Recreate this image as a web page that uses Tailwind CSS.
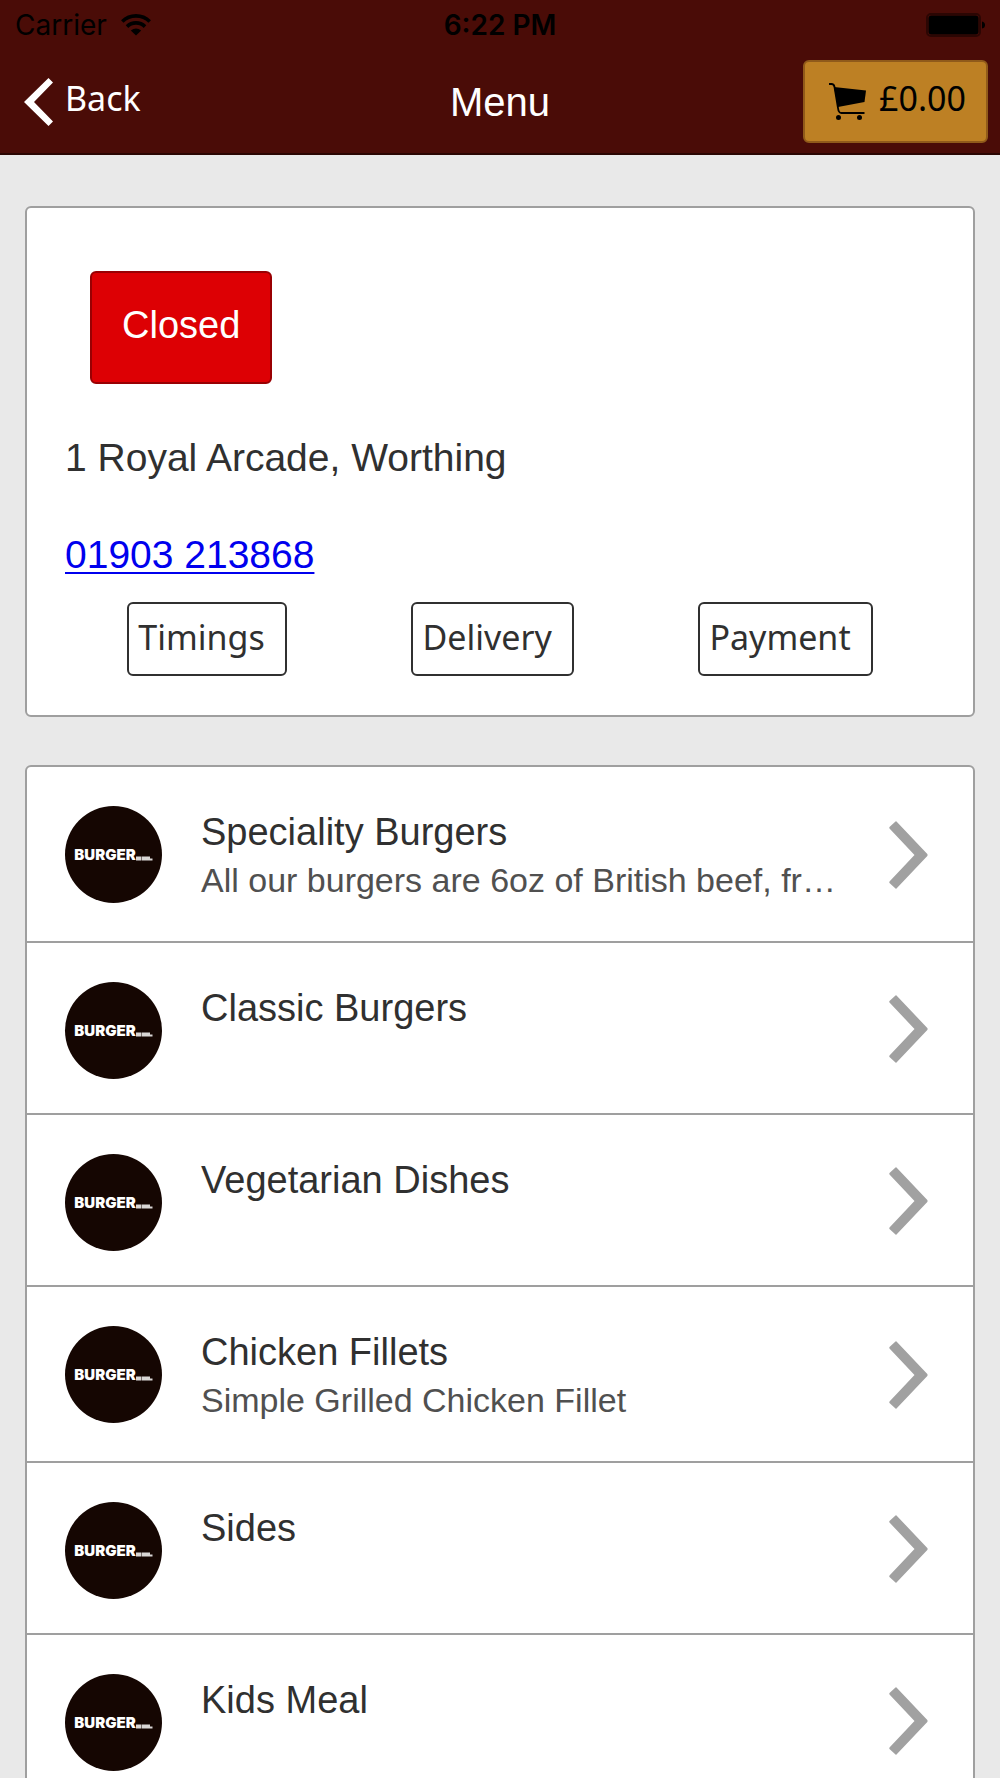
<!DOCTYPE html>
<html lang="en">
<head>
<meta charset="utf-8">
<meta name="viewport" content="width=device-width, initial-scale=1">
<title>Menu</title>
<script src="https://cdn.jsdelivr.net/npm/@tailwindcss/browser@4"></script>
</head>
<body class="h-screen overflow-hidden bg-[#e9e9e9] font-['Liberation_Sans',Arial,sans-serif] text-[#303030]">

<svg class="hidden" aria-hidden="true">
  <symbol id="chevron" viewBox="0 0 39 68">
    <path d="M6.500 0.500Q7 0 7.500 0.500L38.300 33Q39 34 38.300 35L7.500 67.500Q7 68 6.500 67.500L.5 62Q0 61.500.5 60.500L25.500 34L.5 7.500Q0 6.500.5 6Z" fill="#a1a1a1"/>
  </symbol>
  <symbol id="tagline" viewBox="0 0 17 5">
    <path d="M0 .5h5.500v4H0zM6 .5h8v4H6zM14 2.500h2.500v2H14z" fill="#d9d6d5"/>
  </symbol>
</svg>

<header class="border-b-2 border-[#2b0603] bg-[#4a0c07]">
  <div class="grid h-[50px] grid-cols-3 items-center px-[15px] font-['Inter',sans-serif] text-black">
    <div class="flex items-center gap-[14px] text-[28px] leading-[48px]">
      <span>Carrier</span>
      <svg class="h-[22px] w-[30px]" viewBox="0 0 30 22" fill="none" stroke="#000" stroke-width="3.600" aria-hidden="true">
        <path d="M1.300 7.500A19.500 19.500 0 0 1 28.700 7.500"/>
        <path d="M6 12.600A12.800 12.800 0 0 1 24 12.600"/>
        <path d="M15 21.500L9.800 16.400Q15 12.600 20.200 16.400Z" fill="#000" stroke="none"/>
      </svg>
    </div>
    <div class="text-center text-[28px] font-semibold leading-[48px]">6:22 PM</div>
    <svg class="h-6 w-[59px] justify-self-end" viewBox="0 0 59 24" aria-hidden="true">
      <rect x="1" y="1" width="53" height="22" rx="4" fill="none" stroke="#2b0603" stroke-width="2"/>
      <rect x="2.500" y="2.500" width="50" height="19" rx="3" fill="#000"/>
      <path d="M56 8.500Q59 9 59 12T56 15.500Z" fill="#000"/>
    </svg>
  </div>
  <div class="grid h-[103px] grid-cols-3 items-center px-3 text-white">
    <a href="#" class="flex items-center gap-3 pl-3 font-['Noto_Sans',sans-serif] text-[34px] leading-[48px]">
      <svg class="h-12 w-[29px]" viewBox="0 0 29 48" aria-hidden="true"><path d="M24.500 0L29 4.500L10 24L29 43.500L24.500 48L0 24Z" fill="#fff"/></svg>
      <span class="pb-2">Back</span>
    </a>
    <h1 class="text-center text-[40px] leading-[48px]">Menu</h1>
    <button type="button" class="flex h-[83px] items-center gap-3 justify-self-end rounded-md border-2 border-[#905a1a] bg-[#bd8024] pl-6 pr-5 font-['Noto_Sans',sans-serif] text-[34px] leading-[48px] text-black">
      <svg class="h-[38px] w-[38px]" viewBox="0 0 38 38" aria-hidden="true">
        <path d="M5 4L37 7.500L35.500 19L9 24Z"/>
        <path d="M0 1H2.500Q5 1 5.500 4L9 25Q9.500 30 12.500 30H35.500" fill="none" stroke="#000" stroke-width="1.800"/>
        <circle cx="9.500" cy="34.500" r="2.500"/><circle cx="30.500" cy="34.500" r="2.500"/>
      </svg>
      <span class="pb-2">£0.00</span>
    </button>
  </div>
</header>

<main class="flex flex-col gap-12 px-[25px] pt-[51px]">
  <section class="rounded-md border-2 border-[#9f9f9f] bg-white px-[38px] pb-[39px] pt-[63px] text-[39px] leading-[48px]">
    <span class="ml-[25px] inline-block rounded-md border-2 border-[#990003] bg-[#dd0004] px-[30px] pb-[33px] pt-7 align-top text-[38px] text-white">Closed</span>
    <p class="mt-[50px]">1 Royal Arcade, Worthing</p>
    <p class="mt-[49px]"><a href="tel:01903213868" class="text-[#0000ee] underline decoration-2 underline-offset-4">01903 213868</a></p>
    <div class="mt-[23px] flex justify-around font-['Noto_Sans',sans-serif] text-[34px]">
      <button type="button" class="rounded-md border-2 border-[#303030] pb-[13px] pl-[9px] pr-5 pt-[9px]">Timings</button>
      <button type="button" class="rounded-md border-2 border-[#303030] pb-[13px] pl-[9px] pr-5 pt-[9px]">Delivery</button>
      <button type="button" class="rounded-md border-2 border-[#303030] pb-[13px] pl-[9px] pr-5 pt-[9px]">Payment</button>
    </div>
  </section>

  <ul class="divide-y-2 divide-[#9f9f9f] rounded-md border-2 border-[#9f9f9f] bg-white text-[38px] leading-[48px]">
    <li><a href="#" class="flex items-center pb-[34px] pl-[38px] pr-[45px] pt-[39px]">
      <span class="mr-[39px] flex size-[97px] shrink-0 items-center justify-center self-start rounded-full bg-[#150602] font-['Inter',sans-serif] text-[15px] font-black leading-5 text-white">BURGER<svg class="mt-[7px] h-[5px] w-[17px]" aria-hidden="true"><use href="#tagline"/></svg></span>
      <span class="min-w-0 flex-1 self-start pb-[3px] pt-[2px]"><span class="block">Speciality Burgers</span><span class="block text-[34px] text-[#505050]">All our burgers are 6oz of British beef, fr…</span></span>
      <svg class="mb-1 ml-12 h-[68px] w-[39px] shrink-0" aria-hidden="true"><use href="#chevron"/></svg>
    </a></li>
    <li><a href="#" class="flex items-center pb-[34px] pl-[38px] pr-[45px] pt-[39px]">
      <span class="mr-[39px] flex size-[97px] shrink-0 items-center justify-center self-start rounded-full bg-[#150602] font-['Inter',sans-serif] text-[15px] font-black leading-5 text-white">BURGER<svg class="mt-[7px] h-[5px] w-[17px]" aria-hidden="true"><use href="#tagline"/></svg></span>
      <span class="min-w-0 flex-1 self-start pt-[2px]">Classic Burgers</span>
      <svg class="mb-1 ml-12 h-[68px] w-[39px] shrink-0" aria-hidden="true"><use href="#chevron"/></svg>
    </a></li>
    <li><a href="#" class="flex items-center pb-[34px] pl-[38px] pr-[45px] pt-[39px]">
      <span class="mr-[39px] flex size-[97px] shrink-0 items-center justify-center self-start rounded-full bg-[#150602] font-['Inter',sans-serif] text-[15px] font-black leading-5 text-white">BURGER<svg class="mt-[7px] h-[5px] w-[17px]" aria-hidden="true"><use href="#tagline"/></svg></span>
      <span class="min-w-0 flex-1 self-start pt-[2px]">Vegetarian Dishes</span>
      <svg class="mb-1 ml-12 h-[68px] w-[39px] shrink-0" aria-hidden="true"><use href="#chevron"/></svg>
    </a></li>
    <li><a href="#" class="flex items-center pb-[34px] pl-[38px] pr-[45px] pt-[39px]">
      <span class="mr-[39px] flex size-[97px] shrink-0 items-center justify-center self-start rounded-full bg-[#150602] font-['Inter',sans-serif] text-[15px] font-black leading-5 text-white">BURGER<svg class="mt-[7px] h-[5px] w-[17px]" aria-hidden="true"><use href="#tagline"/></svg></span>
      <span class="min-w-0 flex-1 self-start pb-[3px] pt-[2px]"><span class="block">Chicken Fillets</span><span class="block text-[34px] text-[#505050]">Simple Grilled Chicken Fillet</span></span>
      <svg class="mb-1 ml-12 h-[68px] w-[39px] shrink-0" aria-hidden="true"><use href="#chevron"/></svg>
    </a></li>
    <li><a href="#" class="flex items-center pb-[34px] pl-[38px] pr-[45px] pt-[39px]">
      <span class="mr-[39px] flex size-[97px] shrink-0 items-center justify-center self-start rounded-full bg-[#150602] font-['Inter',sans-serif] text-[15px] font-black leading-5 text-white">BURGER<svg class="mt-[7px] h-[5px] w-[17px]" aria-hidden="true"><use href="#tagline"/></svg></span>
      <span class="min-w-0 flex-1 self-start pt-[2px]">Sides</span>
      <svg class="mb-1 ml-12 h-[68px] w-[39px] shrink-0" aria-hidden="true"><use href="#chevron"/></svg>
    </a></li>
    <li><a href="#" class="flex items-center pb-[34px] pl-[38px] pr-[45px] pt-[39px]">
      <span class="mr-[39px] flex size-[97px] shrink-0 items-center justify-center self-start rounded-full bg-[#150602] font-['Inter',sans-serif] text-[15px] font-black leading-5 text-white">BURGER<svg class="mt-[7px] h-[5px] w-[17px]" aria-hidden="true"><use href="#tagline"/></svg></span>
      <span class="min-w-0 flex-1 self-start pt-[2px]">Kids Meal</span>
      <svg class="mb-1 ml-12 h-[68px] w-[39px] shrink-0" aria-hidden="true"><use href="#chevron"/></svg>
    </a></li>
  </ul>
</main>
</body>
</html>
